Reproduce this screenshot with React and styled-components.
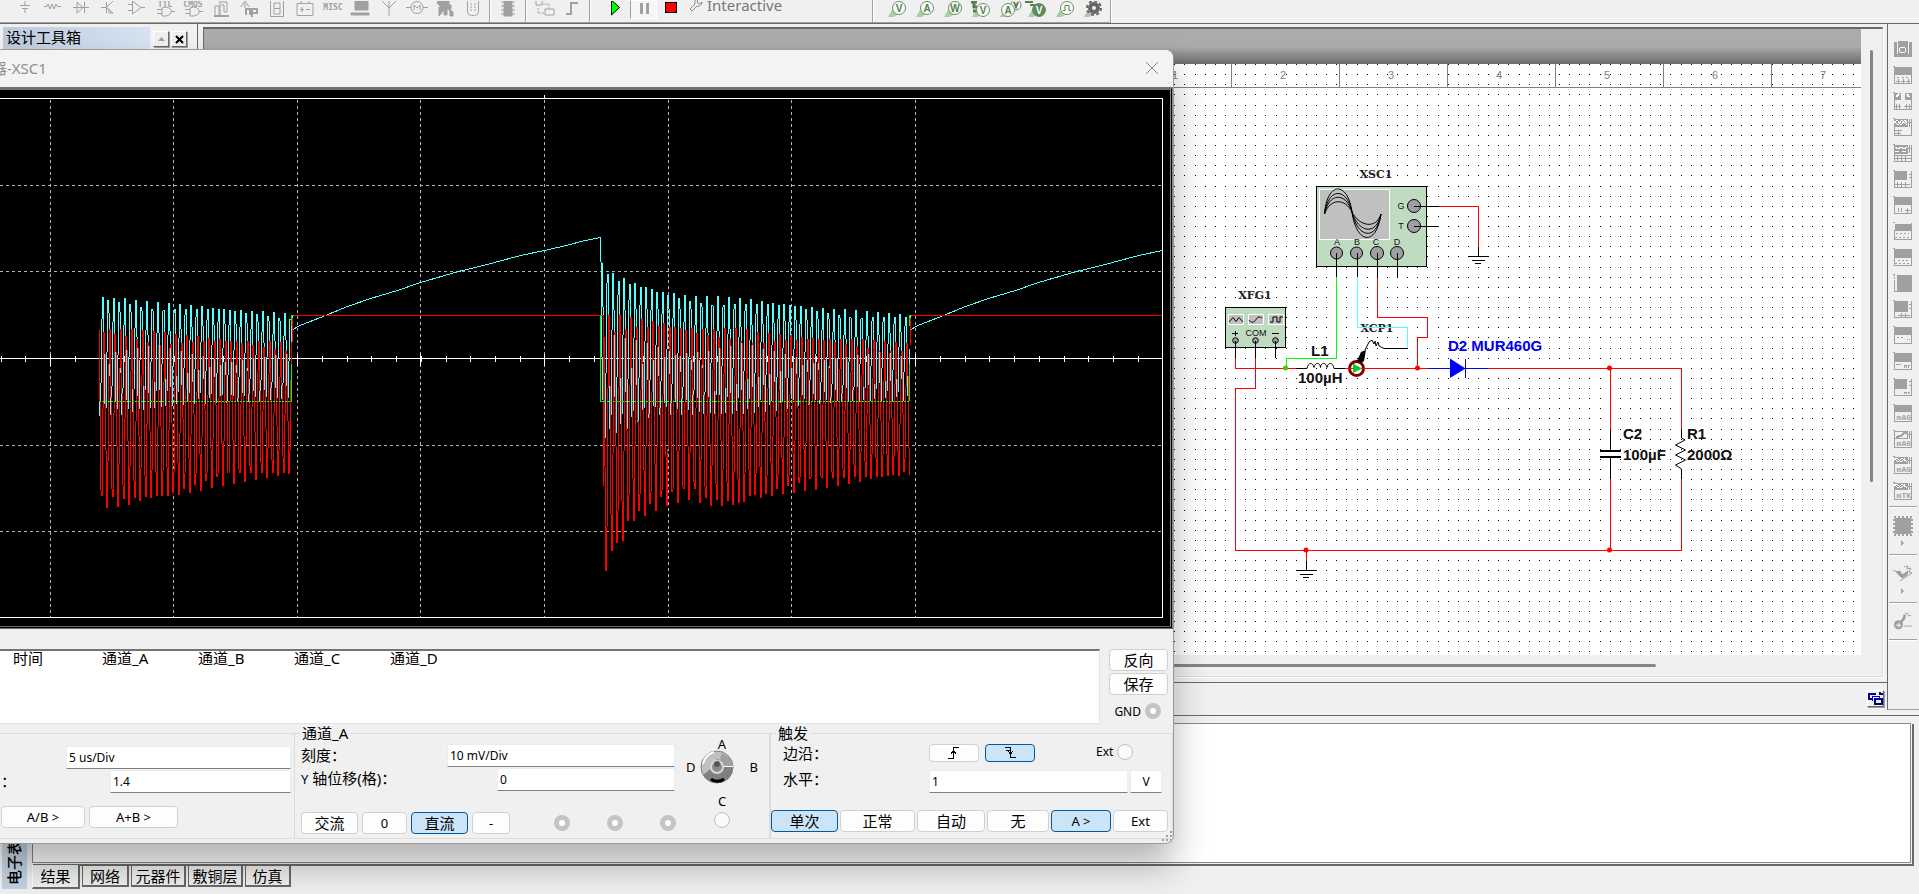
import React from 'react';
import styled, { createGlobalStyle, css } from 'styled-components';


const GlobalStyle = createGlobalStyle`

    * { box-sizing:border-box; }

    body{
        margin:0;
        background:#f0f0f0;
        color:#000;
        font-family:"Noto Sans", "Noto Sans CJK SC", sans-serif;
        font-size:13px;
        overflow:hidden;
    }

    button, input{
        font:inherit;
        color:inherit;
        margin:0;
    }
`


/* ---------- waveform data ---------- */

const PERIOD = 5.52;

// linear interpolation through a list of [x, y] points
function lerp(points, x) {
    if (x <= points[0][0]) return points[0][1];
    for (let i = 1; i < points.length; i++) {
        const [x1, y1] = points[i];
        if (x <= x1) {
            const [x0, y0] = points[i - 1];
            return y0 + (y1 - y0) * (x - x0) / (x1 - x0);
        }
    }
    return points[points.length - 1][1];
}

// one vertical segment for each pixel column, like the instrument does
function ringing(from, to, top, bottom, peak) {
    const at = x => {
        const hi = lerp(top, x);
        const lo = lerp(bottom, x);
        return (hi + lo) / 2 - (lo - hi) / 2 * Math.cos(2 * Math.PI * (x - peak) / PERIOD);
    };
    let d = '';
    for (let x = from; x < to; x++) {
        d += `M${x + 0.5} ${at(x).toFixed(1)}V${at(x + 1).toFixed(1)}`;
    }
    return d;
}

const cyanTop1 = [[99, 295], [118, 297], [150, 301], [190, 304], [240, 309], [291, 313]];
const cyanLow1 = [[99, 416], [122, 415], [160, 409], [200, 404], [291, 400]];
const redTop1 = [[99, 327], [125, 328], [160, 332], [220, 337], [291, 342]];
const redLow1 = [[99, 508], [125, 507], [145, 502], [180, 496], [230, 484], [291, 476]];

const cyanTop2 = [[601, 262], [607, 263], [612, 272], [624, 277], [641, 283], [658, 289], [690, 295], [735, 297], [781, 302], [820, 307], [863, 311], [909, 314]];
const cyanLow2 = [[601, 442], [610, 436], [626, 430], [640, 421], [660, 415], [730, 416], [780, 411], [800, 405], [909, 401]];
const redTop2 = [[601, 314], [630, 316], [660, 320], [684, 325], [705, 328], [742, 328], [760, 332], [820, 336], [863, 339], [909, 343]];
const redLow2 = [[601, 582], [606, 576], [611, 557], [618, 548], [623, 544], [629, 525], [646, 516], [665, 507], [694, 499], [704, 507], [742, 507], [750, 499], [765, 500], [780, 495], [820, 489], [850, 484], [909, 476]];

const charge = [[293, 329], [297, 326], [325, 315], [347, 306], [370, 298], [397, 290], [420, 282], [458, 271], [483, 265], [520, 255], [544, 250], [570, 244], [580, 241], [600, 237]];
const chargePath = (dx, end) => 'M' + charge
    .filter(p => p[0] + dx <= end)
    .map(([x, y]) => `${x + dx + 0.5} ${y + 0.5}`)
    .join('L');

const gridX = [50, 173, 297, 420, 544, 668, 791, 915];
const gridY = [185, 271, 445, 531];
const minorTicks = [];
for (let i = -2; i < 48; i++) {
    const x = Math.round(50 + i * 24.72);
    if (x > 0 && x < 1162) minorTicks.push(x);
}


const ScopeGraph = () => (
    <GraphSvg viewBox='0 90 1170 536' width='1170' height='536' shapeRendering='crispEdges' fill='none'>
        <g stroke='#b4b4b4' strokeDasharray='3 3'>
            {gridX.map(x => <path key={x} d={`M${x + 0.5} 100V617`} />)}
            {gridY.map(y => <path key={y} d={`M0 ${y + 0.5}H1162`} />)}
        </g>
        <g stroke='#fff'>
            <path d='M0 98.5H1162.5V617.5H0M544.5 95V98M0 358.5H1162' />
            {minorTicks.map(x => <path key={x} d={`M${x + 0.5} 356V362`} />)}
            {gridX.map(x => <path key={x} d={`M${x + 0.5} 354V366`} />)}
        </g>
        <g stroke='#5ff'>
            <path d={ringing(99, 292, cyanTop1, cyanLow1, 102.8)} />
            <path d={ringing(602, 910, cyanTop2, cyanLow2, 607.6)} />
            <path d='M600.5 237V262M601.5 262V357M602.5 357V400M603.5 400V440' />
            <path d='M292.5 316V339M910.5 316V339' />
            <path d={chargePath(0, 600)} />
            <path d={chargePath(618, 1162)} />
        </g>
        <g stroke='#f00'>
            <path d={ringing(99, 292, redTop1, redLow1, 104.3)} />
            <path d={ringing(604, 910, redTop2, redLow2, 609)} />
            <path d='M292.5 318V342M603.5 315V486M293 315.5H604M910.5 318V345M911 315.5H1162' />
        </g>
        <path stroke='#0f0' d='M291.5 401V364M291.5 326V315M292 315.5H294M600.5 315V402M600 401.5H604M909.5 401V364M909.5 326V315M909 315.5H912' />
        <path stroke='#2f0' strokeDasharray='2 1' d='M99 401.5H292M604 401.5H910' />
    </GraphSvg>
)

const GraphSvg = styled.svg`

    display:block;
    margin-left:8px;
`


/* ---------- schematic ---------- */

const Schematic = () => (
    <SheetSvg viewBox='204 64 1658 591' width='1658' height='591' fill='none'>
        <defs>
            <pattern id='dots' patternUnits='userSpaceOnUse' x='1843' y='105' width='81' height='81'>
                {[0, 10, 20, 30, 40, 50, 60, 70].map(y =>
                    [0, 10, 20, 30, 40, 50, 60, 70].map(x =>
                        <rect key={x + '-' + y} x={x} y={y} width='1' height='1' fill='#000' />
                    )
                )}
            </pattern>
        </defs>
        <rect x='204' y='64' width='1658' height='591' fill='#fff' />
        <rect x='204' y='64' width='1658' height='591' fill='url(#dots)' shapeRendering='crispEdges' />

        <g shapeRendering='crispEdges' stroke='#808080'>
            <path d='M204 87.5H1862' />
            {[1123, 1231, 1339, 1447, 1555, 1663, 1771].map(x => <path key={x} d={`M${x + 0.5} 64V87`} />)}
        </g>
        {[1, 2, 3, 4, 5, 6, 7].map(n => (
            <RulerText key={n} x={1067 + n * 108} y='79'>{n}</RulerText>
        ))}

        <g shapeRendering='crispEdges'>
            <rect x='1316.5' y='186.5' width='110' height='80' fill='#c0dcc0' stroke='#000' />
            <rect x='1319.5' y='189.5' width='70' height='50' fill='#c0c0c0' stroke='#fff' />
            <rect x='1225.5' y='307.5' width='60' height='40' fill='#c0dcc0' stroke='#000' />
            <rect x='1228.5' y='314.5' width='15' height='10' fill='#c0c0c0' stroke='#fff' />
            <rect x='1248.5' y='314.5' width='15' height='10' fill='#c0c0c0' stroke='#fff' />
            <rect x='1268.5' y='314.5' width='15' height='10' fill='#c0c0c0' stroke='#fff' />
        </g>
        <g stroke='#000'>
            <path d='M1324.5 214C1327 181 1348 181 1352 212S1376 248 1381 214' />
            <path d='M1324.5 214C1328 187 1347 187 1352 212S1376 243 1381 214' />
            <path d='M1324.5 214C1329 192 1346 192 1352 212S1376 237 1381 214' />
            <path d='M1324.5 214C1330 198 1345 198 1352 212S1376 230 1381 214' />
            <path d='M1229 322L1233 317.5L1236 321.5L1239 317.5L1243 322M1249 320C1251 323 1254 323 1256 319.5S1260 317 1262 318M1270 322H1273V317H1277V322H1280V317H1283' />
        </g>
        <g fill='#a0a0a4' stroke='#000'>
            <circle cx='1414' cy='206' r='6.5' />
            <circle cx='1414' cy='226' r='6.5' />
            <circle cx='1336.5' cy='253' r='6' />
            <circle cx='1356.5' cy='253' r='6' />
            <circle cx='1377' cy='253' r='6.5' />
            <circle cx='1397' cy='253' r='6.5' />
            <circle cx='1235.5' cy='340.5' r='2.8' />
            <circle cx='1255.5' cy='340.5' r='2.8' />
            <circle cx='1275.5' cy='340.5' r='2.8' />
        </g>

        <PinText x='1401' y='209'>G</PinText>
        <PinText x='1401' y='229'>T</PinText>
        <PinText x='1337' y='245'>A</PinText>
        <PinText x='1357' y='245'>B</PinText>
        <PinText x='1376' y='245'>C</PinText>
        <PinText x='1397' y='245'>D</PinText>
        <PinText x='1256' y='336'>COM</PinText>
        <path stroke='#000' shapeRendering='crispEdges' d='M1232 333.5H1238M1235.5 331V336M1272 333.5H1279' />

        <DeviceText x='1376' y='178'>XSC1</DeviceText>
        <DeviceText x='1255' y='299'>XFG1</DeviceText>
        <DeviceText x='1377' y='332'>XCP1</DeviceText>

        <g shapeRendering='crispEdges'>
            <g stroke='#f00'>
                <path d='M1439 206.5H1478.5V247' />
                <path d='M1377.5 278V317.5H1427.5V337.5H1417.5V368' />
                <path d='M1235.5 358V368.5H1296M1345 368.5H1428M1488 368.5H1681.5V429' />
                <path d='M1255.5 358V388.5H1235.5V550.5H1681.5V479' />
                <path d='M1610.5 368V430M1610.5 479V550M1306.5 550V561' />
            </g>
            <path stroke='#0f0' d='M1336.5 277V358.5H1286.5V368' />
            <path stroke='#5ff' d='M1357.5 277V327.5H1407.5V348' />
            <g stroke='#000'>
                <path d='M1414 206.5H1439M1414 226.5H1439M1336.5 253V277M1357.5 253V277M1377.5 253V278M1397.5 253V278' />
                <path d='M1235.5 341V358M1255.5 341V358M1275.5 341V358M1296 368.5H1307M1334 368.5H1345M1384 348.5H1408' />
                <path d='M1478.5 247V256M1468 256.5H1489M1472 260.5H1485M1475 263.5H1481' />
                <path d='M1306.5 561V570M1296 570.5H1317M1300 574.5H1313M1303 577.5H1309' />
                <path d='M1610.5 430V451M1610.5 458V479M1681.5 429V438M1681.5 469V479' />
                <path strokeWidth='2' d='M1600 451H1621M1600 457H1621' />
            </g>
            <path stroke='#00f' d='M1428 368.5H1488M1465.5 359V378' />
        </g>
        <path fill='#00f' d='M1450 358.5L1465.5 368.5L1450 378Z' />
        <path stroke='#000' d='M1681.5 438L1685 440L1675.5 445L1685.5 450L1675.5 455L1685.5 460L1675.5 465L1681.5 469' />
        <path stroke='#000' d='M1307 368.5C1308 362 1313 362 1314 367.5C1315 362 1320 362 1320.5 367.5C1321 362 1326 362 1327 367.5C1328 362 1333 362 1334 368.5' />
        <g fill='#f00'>
            <circle cx='1417.5' cy='368' r='2.5' />
            <circle cx='1609.5' cy='368' r='2.5' />
            <circle cx='1609.5' cy='550' r='2.5' />
            <circle cx='1306' cy='550' r='2.5' />
        </g>
        <circle cx='1285.5' cy='368' r='2.5' fill='#4c0' />

        <circle cx='1356.5' cy='368.5' r='7' fill='#fff' stroke='#800000' strokeWidth='3' />
        <path stroke='#f00' d='M1348 368.5H1365' />
        <path fill='#0c2' d='M1353 363.5L1362 368.5L1353 373Z' />
        <path fill='#000' d='M1357 361L1361 352L1366 350L1364 361L1361 363Z' />
        <path stroke='#000' d='M1365 350L1369 342L1372 340L1374 344L1375 341L1376 346L1378 342L1379 346L1384 348.5' />

        <PartText x='1311' y='356'>L1</PartText>
        <PartText x='1298' y='383'>100µH</PartText>
        <PartText x='1448' y='351' $color='#0000f0'>D2 MUR460G</PartText>
        <PartText x='1623' y='439'>C2</PartText>
        <PartText x='1623' y='460'>100µF</PartText>
        <PartText x='1687' y='439'>R1</PartText>
        <PartText x='1687' y='460'>2000Ω</PartText>
    </SheetSvg>
)

const SheetSvg = styled.svg`

    display:block;
    flex:none;
`

const RulerText = styled.text`

    font:11px "Liberation Sans", sans-serif;
    fill:#808080;
    text-anchor:middle;
`

const PinText = styled.text`

    font:9px "Liberation Sans", sans-serif;
    fill:#111;
    text-anchor:middle;
`

const DeviceText = styled.text`

    font:bold 11px "DejaVu Serif", serif;
    fill:#222;
    text-anchor:middle;
`

const PartText = styled.text`

    font:bold 15px "Liberation Sans", sans-serif;
    fill:${props => props.$color || '#111'};
`


/* ---------- top toolbar ---------- */

const word = (text, y) => (
    <text x='14' y={y} textAnchor='middle' fontSize='8' fontFamily='DejaVu Sans Mono, monospace' fontWeight='bold' fill='#a0a0a0' stroke='none'>{text}</text>
)

const componentIcons = [
    ['source', <path d='M14 0V4M9 4.5H19M11 7.5H17M14 8V12' />],
    ['basic', <path d='M5 5.5H8L9 3L11 8L13 3L15 8L17 3L18 5.5H22' />],
    ['diode', <path d='M6 6.5H22M10 1V12L16 6.5ZM17.5 1V12' />],
    ['transistor', <path d='M6 6.5H11M11.5 1V12M12 6L18 0M12 7L18 12M14 8V12H18' />],
    ['analog', <path d='M5 3.5H9M5 9.5H9M9.5 0V13L18 6.5ZM18 6.5H22' />],
    ['ttl', <g><path d='M6 8.5H11M6 12.5H11M11 7V15H15C22 14 22 7 15 6ZM20 10.5H24' />{word('TTL', 6)}</g>],
    ['cmos', <g><path d='M6 8.5H11M6 12.5H11M11 7V15H15C22 14 22 7 15 6ZM20 10.5H24' />{word('CMOS', 6)}</g>],
    ['misc-digital', <g><path d='M8 5V15H12V5ZM13 0V14M14 4H17V11H20V1H14' /><path d='M7 15H22' strokeWidth='2' /></g>],
    ['mixed', <g><path d='M6 6L10 0L14 6M10 2V7' /><path d='M11 14V8H15V14M17 16V8H22V12H18' strokeWidth='2' /></g>],
    ['indicator', <path d='M7.5 0V15.5H20.5V0M11 2H17V13H11ZM11 7.5H17' />],
    ['power', <path d='M6 2.5H22V14.5H6ZM10 0V2M18 0V2M9 8.5H13M15 8.5H19M11 6V11' />],
    ['misc', word('MISC', 9)],
    ['peripheral', <path d='M8 0H21V9H8ZM4 12H22V14H4Z' fill='#a0a0a0' />],
    ['rf', <path d='M14 15V0M14 7L7 0M14 7L21 0' />],
    ['machine', <g><circle cx='14' cy='6.5' r='6' /><path d='M3 6.5H8M20 6.5H25M11 9V4L14 7L17 4V9' /></g>],
    ['connector', <path d='M7 0H18V4H20V8H16V14H13V9L8 15V6H10L6 2ZM18 8L22 11V15H19V11Z' fill='#a0a0a0' />],
    ['mcu', <g><rect x='8.5' y='-4.5' width='11' height='19' rx='4' /><path d='M12 2V10M16 2V10' strokeDasharray='2 1' /></g>],
]

const hierarchyIcon = <g><path d='M5 0V4H11V0M18 8H23V14H14V8Z' /><path d='M7 7V12H13M12 3H18V8' strokeDasharray='2 1' /></g>
const busIcon = <path d='M7 13H12V2H19' strokeWidth='2' />
const chipIcon = <path d='M10 0H18V15H10ZM7 1H21M7 5H21M7 9H21M7 13H21' fill='#a0a0a0' />

const probes = [
    ['Voltage', 'V'],
    ['Current', 'A'],
    ['Power', 'W'],
    ['Differential', 'V', 'legs'],
    ['Voltage and current', 'A', 'twin'],
    ['Reference', 'V', 'solid'],
    ['Digital', 'pulse'],
]

const ProbeIcon = ({ letter, kind }) => (
    <svg width='28' height='18' viewBox='0 0 28 18' fill='none'>
        <path fill='#a9cf9f' d='M4 16L8 9L14 13L10 16Z' />
        {kind === 'legs' && <path stroke='#567f50' strokeWidth='3' d='M3 1H9M6 1V6H9M5 10H11' />}
        {kind === 'twin' && <circle cx='20' cy='4' r='5' fill='#f6faf5' stroke='#6b8f66' />}
        {kind === 'twin' && <path stroke='#567f50' strokeWidth='2' d='M18 1L20 6L22 1' />}
        {kind === 'solid' && <path stroke='#567f50' strokeWidth='2' d='M1 1H9M6 4H11' />}
        <circle cx={kind === 'twin' ? 12 : 15} cy={kind ? 9 : 7} r='6.5' fill={kind === 'solid' ? '#5b8a55' : '#f6faf5'} stroke='#6b8f66' />
        {letter === 'pulse'
            ? <path stroke='#567f50' d='M11 9.5H13V4.5H17V9.5H19' />
            : <text x={kind === 'twin' ? 12 : 15} y={kind ? 13 : 11} textAnchor='middle' fontSize='10' fontWeight='bold' fontFamily='Liberation Sans, sans-serif' fill={kind === 'solid' ? '#fff' : '#567f50'}>{letter}</text>}
    </svg>
)

const ToolIcon = ({ children }) => (
    <svg width='28' height='18' viewBox='0 0 28 18' fill='none' stroke='#a0a0a0'>{children}</svg>
)

const Toolbar = () => (
    <TopBar>
        <ToolGroup $start={11} $end={2}>
            {componentIcons.map(([name, icon]) => (
                <ToolButton key={name} aria-label={name}><ToolIcon>{icon}</ToolIcon></ToolButton>
            ))}
        </ToolGroup>
        <ToolGroup $start={4} $end={3}>
            <ToolButton aria-label='chip'><ToolIcon>{chipIcon}</ToolIcon></ToolButton>
        </ToolGroup>
        <ToolGroup $start={5} $end={2}>
            <ToolButton aria-label='hierarchy'><ToolIcon>{hierarchyIcon}</ToolIcon></ToolButton>
            <ToolButton aria-label='bus'><ToolIcon>{busIcon}</ToolIcon></ToolButton>
        </ToolGroup>
        <ToolGroup $start={12} $end={90}>
            <ToolButton aria-label='run'>
                <svg width='28' height='18' viewBox='0 0 28 18'><path fill='#0f0' stroke='#000' d='M9.5 -1V14L17.5 6.5Z' /></svg>
            </ToolButton>
            <ToolButton aria-label='pause' $sunken>
                <svg width='26' height='18' viewBox='0 0 26 18'><path fill='#a0a0a0' d='M9 2H12V13H9ZM15 2H18V13H15Z' /></svg>
            </ToolButton>
            <ToolButton aria-label='stop'>
                <svg width='28' height='18' viewBox='0 0 28 18'><rect x='8.5' y='1.5' width='11' height='10' fill='#f00' stroke='#000' /></svg>
            </ToolButton>
            <ModeLabel>
                <svg width='14' height='14' viewBox='0 0 14 14' fill='none' stroke='#8a8a8a'>
                    <path d='M1 11L6 6C5 3 7 1 9 1L8 4L10 6L13 4C13 7 10 9 8 8L3 13Z' />
                </svg>
                Interactive
            </ModeLabel>
        </ToolGroup>
        <ToolGroup $start={11} $end={2}>
            {probes.map(([name, letter, kind]) => (
                <ToolButton key={name} aria-label={name}><ProbeIcon letter={letter} kind={kind} /></ToolButton>
            ))}
            <ToolButton aria-label='Probe settings'>
                <svg width='28' height='18' viewBox='0 0 28 18' fill='none'>
                    <path fill='#a9cf9f' d='M4 16L7 10L13 13L9 16Z' />
                    <circle cx='14' cy='7' r='4' stroke='#666' strokeWidth='4' />
                    <circle cx='14' cy='7' r='7' stroke='#666' strokeWidth='2' strokeDasharray='3 2.5' />
                </svg>
            </ToolButton>
        </ToolGroup>
    </TopBar>
)

const TopBar = styled.header`

    flex:none;
    display:flex;
    height:24px;
    border-bottom:1px solid #696969;
    overflow:hidden;
`

const ToolGroup = styled.div`

    display:flex;
    flex:none;
    padding:0 ${props => props.$end}px 0 ${props => props.$start}px;
    border-right:1px solid #a0a0a0;
    border-bottom:1px solid #a0a0a0;
    box-shadow:1px 0 #fff;
`

const ToolButton = styled.button`

    width:28px;
    height:19px;
    padding:0;
    border:0;
    background:none;
    line-height:0;

    ${props => props.$sunken && css`
        width:27px;
        background:#f6f6f6;
        border:1px solid #fff;
        border-left-color:#a0a0a0;
    `}
`

const ModeLabel = styled.span`

    display:flex;
    gap:4px;
    height:12px;
    align-items:flex-end;
    padding-left:4px;
    font-size:15px;
    line-height:14px;
    color:#777;
`


/* ---------- instruments bar on the right ---------- */

const Block = ({ d }) => <path d={d} fill='#a0a0a0' />
const Light = ({ d }) => <path d={d} stroke='#fff' />

const instruments = [
    ['Multimeter', <g><path d='M1 2H3V14H16V2H18V16H1Z' fill='#a0a0a0' /><Block d='M5 1H14V13H5Z' /><circle cx='9.5' cy='10' r='3' stroke='#fff' /></g>],
    ['Function generator', <g><Block d='M1 1H18V8H1Z' /><path d='M4 11H6M9 11H11M13 11H15M3 15H7M8 15H12M13 15H17M5 13V17M10 13V17M15 13V17' /></g>],
    ['Wattmeter', <g><Block d='M1 1H7V7H1ZM12 1H18V7H12Z' /><path stroke='#fff' strokeWidth='2' d='M3 5L6 2M14 2L16 5' /><path d='M1 14H8M11 14H18M3 12V17M6 12V17M13 12V17M16 12V17' /></g>],
    ['Oscilloscope', <g><Block d='M1 1H14V8H1Z' /><Light d='M1 5L4 2L8 7L12 2L14 5M1 3L5 7L9 2L14 7' /><path d='M16 1V9M14 4H18M1 12H9M2 15H8M5 12V17' /></g>],
    ['Four channel scope', <g><Block d='M1 1H14V9H1Z' /><Light d='M2 3L5 5L8 3L11 5L14 3M2 7H6M9 7H13' /><path d='M16 1V9M14 4H18M1 11H18M1 14H18M4 11V17M8 11V17M12 11V17' /></g>],
    ['Bode plotter', <g><Block d='M1 1H13V9H1Z' /><path d='M16 4H18M16 7H18M2 14H17M4 12V17M8 12V17M12 12V17' /></g>],
    ['Frequency counter', <g><Block d='M1 1H18V8H1Z' /><path d='M5 12V16M8 12V16M12 14H17M14 12V17' /></g>],
    ['Word generator', <g><Block d='M2 2H18V8H2Z' /><path d='M3 11H16M2 15.5H18' strokeDasharray='2 2' /></g>],
    ['Logic converter', <g><Block d='M1 1H18V9H1Z' /><path d='M5 12H15M2 15.5H18' strokeDasharray='2 2' /></g>],
    ['Logic analyzer', <g><Block d='M4 1H18V17H4Z' /><path d='M1.5 0V17' strokeDasharray='2 1' /></g>],
    ['IV analyzer', <g><Block d='M1 1H14V11H1Z' /><path d='M16 4H18M16 8H18M5 15H17M8 13V17M12 13V17' /></g>],
    ['Distortion analyzer', <g><Block d='M1 1H18V8H1Z' /><path d='M4 11H12M14 13L17 16M17 13L14 16' strokeDasharray='2 2' /></g>],
    ['Spectrum analyzer', <g><Block d='M1 1H18V9H1Z' /><path d='M3 12H8M11 16V13H13V16M15 16V13H17' /></g>],
    ['Network analyzer', <g><Block d='M1 1H13V10H1Z' /><path d='M16 3H18M16 7H18M11 16V14H13V16M15 16V14H17' /></g>],
    ['Agilent generator', <Block d='M1 1H18V7H1Z' />, 'AG'],
    ['Agilent multimeter', <g><path d='M1 1H14V8H1ZM16 1V9M14 4H18' /><path d='M3 7L8 6L11 3H14' strokeWidth='2' /></g>, 'AG'],
    ['Agilent scope', <g><Block d='M1 1H14V7H1Z' /><Light d='M1 4L4 2L8 6L12 2M1 2L5 6L9 2L14 6' /><path d='M16 1V8M14 4H18' /></g>, 'AG'],
    ['Tektronix scope', <g><Block d='M1 1H14V7H1Z' /><Light d='M1 4L4 2L8 6L12 2M1 2L5 6L9 2L14 6' /><path d='M16 1V8M14 4H18' /></g>, 'TK'],
]

const SideTools = () => (
    <SideBar>
        <SideGroup>
            {instruments.map(([name, drawing, tag]) => (
                <SideButton key={name} aria-label={name}>
                    <svg width='20' height='20' viewBox='0 0 20 20' fill='none' stroke='#a0a0a0' shapeRendering='crispEdges'>
                        {name !== 'Multimeter' && <path d='M0 .5H2M1.5 8V17.5H18.5V1' />}
                        {drawing}
                        {tag && <text x='18' y='16' textAnchor='end' fontSize='8' fontWeight='bold' fontFamily='Liberation Mono, monospace' fill='#a0a0a0' stroke='none'>m{tag}</text>}
                    </svg>
                </SideButton>
            ))}
        </SideGroup>
        <SideGroup $last>
            <SideButton $tall aria-label='LabVIEW instruments'>
                <svg width='20' height='20' viewBox='0 0 20 20'>
                    <rect x='2' y='2' width='16' height='16' fill='#a0a0a0' />
                    <rect x='1' y='1' width='18' height='18' fill='none' stroke='#a0a0a0' strokeWidth='2' strokeDasharray='2 2' />
                </svg>
                <Arrow />
            </SideButton>
        </SideGroup>
        <SideGroup $last>
            <SideButton $tall aria-label='NI instruments'>
                <svg width='20' height='20' viewBox='0 0 20 20' fill='none' stroke='#a0a0a0'>
                    <path fill='#a0a0a0' d='M3 8L7 7L9 11L15 7L14 11L9 14Z' />
                    <path d='M0 6L4 8M11 3L15 2L14 5L18 4L16 8L19 9L13 13L7 17' />
                </svg>
                <Arrow />
            </SideButton>
        </SideGroup>
        <SideGroup $last>
            <SideButton aria-label='Current clamp'>
                <svg width='20' height='22' viewBox='0 0 20 22' fill='none' stroke='#a0a0a0'>
                    <circle cx='5' cy='14' r='5' fill='#a0a0a0' stroke='none' />
                    <path stroke='#fff' d='M2 14.5H8M5.5 12V17' />
                    <path d='M11 15.5H20' />
                    <path strokeWidth='3' d='M8 11L11 7L12 3' />
                    <path d='M12 2L15 1L16 4L19 4' />
                </svg>
            </SideButton>
        </SideGroup>
    </SideBar>
)

const Arrow = () => (
    <svg width='20' height='8' viewBox='0 0 20 8'><path fill='#a0a0a0' d='M8 1L11 4L8 7Z' /></svg>
)

const SideBar = styled.nav`

    flex:none;
    width:32px;
    margin-bottom:5px;
    border-left:1px solid #696969;
    border-bottom:1px solid #a0a0a0;
`

const SideGroup = styled.div`

    display:flex;
    flex-direction:column;
    gap:6px;
    width:28px;
    margin-left:1px;
    padding:${props => props.$last ? '9px 0 7px 4px' : '16px 0 4px 4px'};
    border-bottom:1px solid #a0a0a0;
    box-shadow:0 1px #fff;
`

const SideButton = styled.button`

    display:flex;
    flex-direction:column;
    gap:3px;
    width:20px;
    height:${props => props.$tall ? 31 : 20}px;
    padding:0;
    border:0;
    background:none;
`


/* ---------- oscilloscope window ---------- */

const RisingEdge = () => (
    <svg width='16' height='12' viewBox='0 0 16 12' fill='none' stroke='#000' shapeRendering='crispEdges'>
        <path d='M2 11.5H7.5V.5H13M5 6.5L7.5 4L10 6.5' />
    </svg>
)

const FallingEdge = () => (
    <svg width='16' height='12' viewBox='0 0 16 12' fill='none' stroke='#000' shapeRendering='crispEdges'>
        <path d='M3 .5H8.5V10.5H14M6 4L8.5 7L11 4M4 3.5H8' />
    </svg>
)

const Knob = () => (
    <svg width='34' height='34' viewBox='0 0 34 34' fill='none'>
        <circle cx='17' cy='17' r='16' fill='#c0c0c0' stroke='#808080' />
        <path fill='#808080' d='M3 25L13 17L17 9L33 15C34 26 27 33 17 33C11 33 6 30 3 25Z' />
        <path fill='#a0a0a4' d='M17 17L33 16L30 8L22 3Z' />
        <path stroke='#fff' strokeWidth='2' d='M3 14C4 8 8 4 14 2' />
        <path stroke='#fff' d='M23 16.5H33' />
        <circle cx='17' cy='17' r='6' fill='#8a8a8a' stroke='#d8d8d8' strokeWidth='2' />
        <circle cx='17' cy='14' r='3' fill='#555' />
        <path stroke='#000' strokeWidth='3' d='M11 29C14 32 20 32 24 29' />
        <path stroke='#808000' d='M26 27L28 25M30 21V23' />
    </svg>
)

const ScopeWindow = () => (
    <Window>
        <TitleBar>
            <span>器-XSC1</span>
            <CloseButton aria-label='关闭'>
                <svg width='12' height='12' viewBox='0 0 12 12' stroke='#8a8a8a'><path d='M0 0L12 12M12 0L0 12' /></svg>
            </CloseButton>
        </TitleBar>
        <Screen><ScopeGraph /></Screen>

        <Readout>
            <Cursors>
                <CursorTable>
                    <thead>
                        <tr>
                            <th>时间</th>
                            <th>通道_A</th>
                            <th>通道_B</th>
                            <th>通道_C</th>
                            <th>通道_D</th>
                        </tr>
                    </thead>
                </CursorTable>
            </Cursors>
            <SideActions>
                <Button $cjk $w={59}>反向</Button>
                <Button $cjk $w={59}>保存</Button>
                <Terminal>GND <Radio aria-label='GND' disabled /></Terminal>
            </SideActions>
        </Readout>

        <Panels>
            <Timebase>
                <Field><Input aria-label='时基刻度' defaultValue='5 us/Div' $w={225} /></Field>
                <Field $spread>
                    <label htmlFor='xpos'>：</label>
                    <Input id='xpos' defaultValue='1.4' $w={181} />
                </Field>
                <ButtonRow $top={13}>
                    <Button $w={84}>A/B &gt;</Button>
                    <Button $w={89}>A+B &gt;</Button>
                </ButtonRow>
            </Timebase>

            <Group $w={476}>
                <legend>通道_A</legend>
                <Channel>
                    <ChannelForm>
                        <Field $spread>
                            <label htmlFor='scale'>刻度：</label>
                            <Input id='scale' defaultValue='10 mV/Div' $w={228} />
                        </Field>
                        <Field $spread>
                            <label htmlFor='ypos'><small>Y</small> 轴位移(格)：</label>
                            <Input id='ypos' defaultValue='0' $w={178} />
                        </Field>
                        <ButtonRow $top={21}>
                            <Button $cjk $w={57}>交流</Button>
                            <Button $w={45}>0</Button>
                            <Button $cjk $w={57} $on>直流</Button>
                            <Button $w={38}>-</Button>
                            <Terminals>
                                <Radio aria-label='A +' disabled />
                                <Radio aria-label='A -' disabled />
                                <Radio aria-label='B +' disabled />
                            </Terminals>
                        </ButtonRow>
                    </ChannelForm>
                    <Selector>
                        <KnobLetter>A</KnobLetter>
                        <KnobRow><span>D</span><Knob /><span>B</span></KnobRow>
                        <KnobLetter $low>C</KnobLetter>
                        <Radio aria-label='通道选择' />
                    </Selector>
                </Channel>
            </Group>

            <Group $w={403}>
                <legend>触发</legend>
                <Trigger>
                    <TriggerRow>
                        <TriggerLabel as='span'>边沿：</TriggerLabel>
                        <EdgeButtons>
                            <Button $w={50} $small aria-label='上升沿'><RisingEdge /></Button>
                            <Button $w={50} $small $on aria-label='下降沿'><FallingEdge /></Button>
                        </EdgeButtons>
                        <ExtLabel>Ext <Radio /></ExtLabel>
                    </TriggerRow>
                    <TriggerRow>
                        <TriggerLabel htmlFor='level'>水平：</TriggerLabel>
                        <Input id='level' defaultValue='1' $w={199} />
                        <Input aria-label='单位' defaultValue='V' $w={32} $center />
                    </TriggerRow>
                    <ModeRow>
                        <Button $cjk $w={67} $on>单次</Button>
                        <Button $cjk $w={75}>正常</Button>
                        <Button $cjk $w={68}>自动</Button>
                        <Button $cjk $w={62}>无</Button>
                        <Button $w={60} $on>A &gt;</Button>
                        <Button $w={55}>Ext</Button>
                    </ModeRow>
                </Trigger>
            </Group>
        </Panels>
        <Grip viewBox='0 0 10 10' width='10' height='10'>
            <path fill='#a0a0a0' d='M8 0H10V2H8ZM4 4H6V6H4ZM8 4H10V6H8ZM0 8H2V10H0ZM4 8H6V10H4ZM8 8H10V10H8Z' />
        </Grip>
    </Window>
)

const Window = styled.section`

    position:absolute;
    left:-8px;
    top:50px;
    width:1181px;
    background:#f0f0f0;
    border-radius:8px;
    box-shadow:0 0 0 1px #9a9a9a, 0 22px 36px rgba(0,0,0,.3);
    overflow:hidden;
    padding-bottom:4px;
`

const TitleBar = styled.div`

    display:flex;
    justify-content:space-between;
    align-items:center;
    height:37px;
    padding:0 15px 2px 0;
    background:#f3f3f3;
    color:#8f8f8f;
    font-size:15px;
    line-height:20px;
`

const CloseButton = styled.button`

    padding:0;
    border:0;
    background:none;
    line-height:0;
`

const Screen = styled.div`

    background:#000;
    border-top:3px solid #707070;
    border-right:3px double #888;
    border-bottom:3px double #696969;
`

const Readout = styled.div`

    display:flex;
    justify-content:space-between;
    padding:20px 5px 0 0;
    height:96px;
`

const Cursors = styled.div`

    width:1108px;
    height:75px;
    background:#fff;
    border:1px solid #e3e3e3;
    border-top:2px solid #747474;
`

const CursorTable = styled.table`

    table-layout:fixed;
    width:473px;
    margin-left:20px;
    border-collapse:collapse;

    th{
        width:96px;
        padding:0;
        font-weight:normal;
        font-size:15px;
        line-height:14px;
        text-align:left;
    }

    th:first-child{
        width:89px;
    }
`

const SideActions = styled.div`

    display:flex;
    flex-direction:column;
    gap:2px;
    align-items:flex-end;
`

const Terminal = styled.label`

    display:flex;
    align-items:center;
    gap:4px;
    height:24px;
    padding:4px 7px 0 0;
    font-size:12px;
`

const Radio = styled.input.attrs({ type: 'radio' })`

    appearance:none;
    flex:none;
    width:16px;
    height:16px;
    border-radius:50%;
    border:1px solid #c0c0c0;
    background:#fafafa;

    &:disabled{
        border:5px solid #c4c4c4;
        background:#fff;
    }
`

const Button = styled.button`

    display:flex;
    align-items:center;
    justify-content:center;
    flex:none;
    width:${props => props.$w}px;
    height:${props => props.$small ? 18 : 22}px;
    padding:0;
    border:1px solid ${props => props.$on ? '#005a9e' : '#d0d0d0'};
    border-radius:4px;
    background:${props => props.$on ? '#cce4f7' : '#fdfdfd'};
    font-size:${props => props.$cjk ? 15 : 13}px;
    line-height:18px;
`

const Panels = styled.div`

    display:flex;
`

const Timebase = styled.div`

    display:flex;
    flex-direction:column;
    gap:1px;
    width:302px;
    margin-top:8px;
    padding:12px 3px 0 9px;
    border-top:1px solid #dcdcdc;
    border-bottom:1px solid #dcdcdc;
`

const Group = styled.fieldset`

    width:${props => props.$w}px;
    min-width:0;
    margin:0;
    padding:0;
    border:1px solid #dcdcdc;

    legend{
        margin-left:5px;
        padding:0 2px;
        font-size:15px;
        line-height:16px;
    }
`

const Field = styled.div`

    display:flex;
    align-items:center;
    justify-content:${props => props.$spread ? 'space-between' : 'flex-end'};
    height:23px;
    font-size:15px;
    line-height:20px;

    label{
        padding-bottom:2px;
    }

    small{
        font-size:13px;
    }
`

const Input = styled.input`

    width:${props => props.$w}px;
    height:23px;
    padding:0 2px;
    border:1px solid #ececec;
    border-bottom:1px solid #808080;
    background:#fff;
    font-size:12px;
    text-align:${props => props.$center ? 'center' : 'left'};
    border-radius:1px;
`

const ButtonRow = styled.div`

    display:flex;
    align-items:center;
    gap:4px;
    margin-top:${props => props.$top - 1}px;
`

const Channel = styled.div`

    display:flex;
    gap:2px;
`

const ChannelForm = styled.div`

    display:flex;
    flex-direction:column;
    gap:1px;
    width:380px;
    padding:3px 0 4px 6px;
`

const Terminals = styled.div`

    display:flex;
    gap:37px;
    margin-left:40px;
`

const Selector = styled.div`

    display:flex;
    flex-direction:column;
    align-items:center;
    width:90px;
`

const KnobLetter = styled.span`

    height:${props => props.$low ? 28 : 9}px;
    padding-top:${props => props.$low ? 10 : 0}px;
    line-height:${props => props.$low ? 14 : 6}px;
`

const KnobRow = styled.div`

    display:flex;
    align-items:center;
    gap:4px;
    width:72px;
    height:34px;

    span:last-child{
        margin-left:auto;
    }
`

const Trigger = styled.div`

    display:flex;
    flex-direction:column;
    gap:3px;
    padding-top:3px;
`

const TriggerRow = styled.div`

    display:flex;
    align-items:flex-start;
    gap:2px;
    height:23px;
    padding-left:12px;
`

const TriggerLabel = styled.label`

    width:144px;
    font-size:15px;
    line-height:18px;
`

const EdgeButtons = styled.div`

    display:flex;
    gap:6px;
`

const ExtLabel = styled.label`

    display:flex;
    align-items:center;
    gap:4px;
    margin-left:59px;
    font-size:12px;
    line-height:16px;
`

const ModeRow = styled.div`

    display:flex;
    gap:2px;
    padding-top:14px;
`

const Grip = styled.svg`

    position:absolute;
    right:1px;
    bottom:2px;
`


/* ---------- page ---------- */

export default function App() {
    return (
        <Page>
            <GlobalStyle />
            <Toolbar />
            <Workspace>
                <ToolboxPane>
                    <PaneTitle>设计工具箱</PaneTitle>
                    <PaneButton aria-label='折叠'>
                        <svg width='9' height='9' viewBox='0 0 9 9'><path fill='#a0a0a0' d='M1 6L4.500 2L8 6Z' /></svg>
                    </PaneButton>
                    <PaneButton aria-label='关闭'>
                        <svg width='9' height='9' viewBox='0 0 9 9' stroke='#000' strokeWidth='2'><path d='M1 1L8 8M8 1L1 8' /></svg>
                    </PaneButton>
                </ToolboxPane>
                <Center>
                    <Mdi>
                        <MdiTop />
                        <Sheet><Schematic /></Sheet>
                        <ScrollTrack><ScrollThumb $length={432} /></ScrollTrack>
                        <ScrollTrack $horizontal><ScrollThumb $horizontal $length='87.6%' /></ScrollTrack>
                    </Mdi>
                    <SheetTabs>
                        <PaneButton aria-label='窗口' $large>
                            <svg width='15' height='14' viewBox='0 0 15 14' fill='none' stroke='#000080' strokeWidth='2' shapeRendering='crispEdges'>
                                <path d='M1 2H8M1 1V7H4M12 0V2H15' />
                                <rect x='7' y='7' width='7' height='5' />
                                <path stroke='#00f' strokeWidth='1' d='M4.500 9V4.500H11V7' />
                            </svg>
                        </PaneButton>
                    </SheetTabs>
                </Center>
                <SideTools />
            </Workspace>

            <Spreadsheet>
                <SpreadsheetTitle>电子表格视图</SpreadsheetTitle>
                <SpreadsheetBody>
                    <Results />
                    <Tabs>
                        <Tab $w={48} $active>结果</Tab>
                        <Tab $w={47}>网络</Tab>
                        <Tab $w={55}>元器件</Tab>
                        <Tab $w={55}>敷铜层</Tab>
                        <Tab $w={46}>仿真</Tab>
                    </Tabs>
                </SpreadsheetBody>
            </Spreadsheet>
            <ScopeWindow />
        </Page>
    )
}

const Page = styled.main`

    position:relative;
    display:flex;
    flex-direction:column;
    height:100vh;
    overflow:hidden;
`

const Workspace = styled.div`

    flex:1;
    min-height:0;
    display:flex;
    border-bottom:1px solid #696969;
`

const ToolboxPane = styled.aside`

    flex:none;
    display:flex;
    align-items:flex-start;
    gap:2px;
    width:198px;
    padding:3px 0 0 3px;
    border-right:1px solid #696969;
`

const PaneTitle = styled.h2`

    width:147px;
    height:24px;
    margin:0 1px 0 0;
    padding-left:3px;
    background:linear-gradient(90deg, #bccbdc, #d6e3f1);
    font-size:15px;
    font-weight:normal;
    line-height:20px;
`

const PaneButton = styled.button`

    display:flex;
    align-items:center;
    justify-content:center;
    width:${props => props.$large ? 17 : 16}px;
    height:${props => props.$large ? 17 : 16}px;
    margin-top:${props => props.$large ? 0 : 4}px;
    padding:0;
    background:#f0f0f0;
    border:1px solid #fff;
    border-right-color:#696969;
    border-bottom-color:#696969;
    box-shadow:1px 1px #a0a0a0;
`

const Center = styled.div`

    flex:1;
    min-width:0;
    display:flex;
    flex-direction:column;
`

const Mdi = styled.div`

    flex:1;
    min-height:0;
    display:grid;
    grid-template-columns:1fr 21px;
    grid-template-rows:35px 1fr 21px;
    margin:3px 4px 5px 5px;
    border-top:2px solid #696969;
    border-left:1px solid #696969;
    border-right:1px solid #dcdcdc;
    border-bottom:1px solid #dcdcdc;
    box-shadow:1px 1px #fff;
`

const MdiTop = styled.div`

    background:linear-gradient(#ababab 50%, #6b6b6b);
`

const Sheet = styled.div`

    grid-row:2;
    min-width:0;
    min-height:0;
    overflow:hidden;
    background:#fff;
`

const ScrollTrack = styled.div`

    grid-column:${props => props.$horizontal ? 1 : 2};
    grid-row:${props => props.$horizontal ? '3' : '1 / 3'};
    padding:${props => props.$horizontal ? '9px 0 0' : '21px 0 0 9px'};
`

const ScrollThumb = styled.div`

    width:${props => props.$horizontal ? props.$length : '3px'};
    height:${props => props.$horizontal ? '3px' : props.$length + 'px'};
    border-radius:2px;
    background:#858585;
`

const SheetTabs = styled.div`

    flex:none;
    display:flex;
    justify-content:flex-end;
    height:33px;
    padding:7px 3px 0 0;
    border-top:1px solid #696969;
`

const Spreadsheet = styled.section`

    flex:none;
    display:flex;
    gap:5px;
    height:178px;
    padding:5px 4px 5px 2px;
`

const SpreadsheetTitle = styled.h2`

    flex:none;
    width:25px;
    margin:0;
    padding-top:4px;
    background:#c3d3e4;
    writing-mode:vertical-rl;
    text-orientation:sideways;
    transform:rotate(180deg);
    font-size:15px;
    font-weight:500;
    line-height:25px;
`

const SpreadsheetBody = styled.div`

    flex:1;
    min-width:0;
`

const Results = styled.div`

    height:140px;
    margin:2px 4px 0 0;
    background:#fff;
    border:1px solid #868694;
    outline:1px solid #f4f4f4;
    box-shadow:2px 2px 0 1px #696969;
`

const Tabs = styled.div`

    display:flex;
    align-items:flex-start;
    gap:2px;
    padding-top:2px;
`

const Tab = styled.button`

    width:${props => props.$w}px;
    height:${props => props.$active ? 24 : 22}px;
    padding:0;
    border:1px solid #696969;
    border-top-width:${props => props.$active ? 0 : 1}px;
    border-left-color:${props => props.$active ? '#fff' : '#696969'};
    border-right-width:2px;
    border-bottom-width:2px;
    background:#f0f0f0;
    font-size:15px;
    line-height:16px;
`
